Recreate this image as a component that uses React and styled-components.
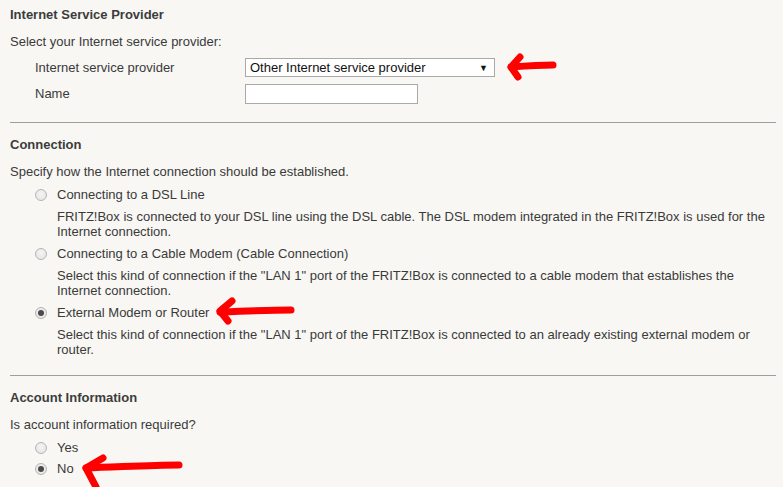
import React from "react";
import styled, { createGlobalStyle } from "styled-components";

const Global = createGlobalStyle`
  html, body { margin: 0; padding: 0; background: #f8f7f3; }
  body { font-family: "Liberation Sans", Arial, sans-serif; color: #3a3a3a; font-size: 13px; }
`;

const Page = styled.div`
  position: relative;
  width: 783px;
  height: 487px;
  overflow: hidden;
  box-sizing: border-box;
  padding: 7px 7px 0 10px;
`;

const Section = styled.section`
  display: flex;
  flex-direction: column;
`;

const Heading = styled.h2`
  margin: 0;
  font-size: 13px;
  font-weight: bold;
  line-height: 16px;
  color: #3c3c3c;
`;

const Intro = styled.p`
  margin: 11px 0 0;
  line-height: 16px;
`;

const FormGrid = styled.div`
  display: grid;
  grid-template-columns: 210px auto;
  row-gap: 7px;
  margin: 8px 0 0 25px;
  align-items: center;
  justify-items: start;
`;

const FieldLabel = styled.span`
  line-height: 16px;
`;

const Select = styled.div`
  box-sizing: border-box;
  width: 250px;
  height: 19px;
  border: 1px solid #a9a9a9;
  background: #fff;
  display: flex;
  align-items: center;
  justify-content: space-between;
  padding: 0 6px 0 4px;
  color: #111;
  font-size: 13px;
`;

const Caret = styled.span`
  font-size: 9px;
  color: #111;
`;

const TextInput = styled.div`
  box-sizing: border-box;
  width: 173px;
  height: 20px;
  border: 1px solid #a9a9a9;
  background: #fff;
`;

const Rule = styled.hr`
  margin: ${(p) => p.$top}px 0 14px;
  border: 0;
  border-top: 1px solid #9aa09d;
  height: 0;
`;

const Options = styled.div`
  display: flex;
  flex-direction: column;
  gap: ${(p) => p.$gap}px;
  margin: 7px 0 0 25px;
`;

const Option = styled.div`
  display: flex;
  flex-direction: column;
`;

const RadioRow = styled.div`
  display: flex;
  align-items: center;
  gap: 10px;
  line-height: 16px;
`;

const Radio = styled.span`
  box-sizing: border-box;
  width: 12px;
  height: 12px;
  border-radius: 50%;
  border: 1px solid #b5b5b5;
  background: radial-gradient(circle at 50% 40%, #f4f4f4 0%, #e2e2e2 100%);
  display: flex;
  align-items: center;
  justify-content: center;
  flex-shrink: 0;
  &::after {
    content: "";
    width: 6px;
    height: 6px;
    border-radius: 50%;
    background: ${(p) => (p.$checked ? "#4a4a4a" : "transparent")};
  }
`;

const Desc = styled.p`
  margin: 6px 0 0 22px;
  line-height: 15px;
`;

const Arrow = styled.svg`
  position: absolute;
  overflow: visible;
  pointer-events: none;
`;

export default function App() {
  return (
    <Page>
      <Global />
      <Section>
        <Heading>Internet Service Provider</Heading>
        <Intro>Select your Internet service provider:</Intro>
        <FormGrid>
          <FieldLabel>Internet service provider</FieldLabel>
          <Select>
            <span>Other Internet service provider</span>
            <Caret>▼</Caret>
          </Select>
          <FieldLabel>Name</FieldLabel>
          <TextInput />
        </FormGrid>
      </Section>
      <Rule $top={18} />
      <Section>
        <Heading>Connection</Heading>
        <Intro>Specify how the Internet connection should be established.</Intro>
        <Options $gap={7}>
          <Option>
            <RadioRow>
              <Radio />
              <span>Connecting to a DSL Line</span>
            </RadioRow>
            <Desc>
              FRITZ!Box is connected to your DSL line using the DSL cable. The DSL modem integrated in the FRITZ!Box is used for the
              Internet connection.
            </Desc>
          </Option>
          <Option>
            <RadioRow>
              <Radio />
              <span>Connecting to a Cable Modem (Cable Connection)</span>
            </RadioRow>
            <Desc>
              Select this kind of connection if the "LAN 1" port of the FRITZ!Box is connected to a cable modem that establishes the
              <br />
              Internet connection.
            </Desc>
          </Option>
          <Option>
            <RadioRow>
              <Radio $checked />
              <span>External Modem or Router</span>
            </RadioRow>
            <Desc>
              Select this kind of connection if the "LAN 1" port of the FRITZ!Box is connected to an already existing external modem or
              router.
            </Desc>
          </Option>
        </Options>
      </Section>
      <Rule $top={18} />
      <Section>
        <Heading>Account Information</Heading>
        <Intro>Is account information required?</Intro>
        <Options $gap={5}>
          <RadioRow>
            <Radio />
            <span>Yes</span>
          </RadioRow>
          <RadioRow>
            <Radio $checked />
            <span>No</span>
          </RadioRow>
        </Options>
      </Section>

      <Arrow style={{ left: 0, top: 0 }} width="783" height="487">
        <g fill="none" stroke="#ff0000" strokeWidth="7" strokeLinecap="round" strokeLinejoin="round">
          <path d="M553 65 C540 65 525 66 511 67" />
          <path d="M520 57 L511 67 L518 77" />
          <path d="M291 310 C270 310 245 311 220 312" />
          <path d="M232 301 L220 311 L228 321" />
          <path d="M179 465 C150 465 120 467 86 468" />
          <path d="M103 458 L86 468 L96 487" />
        </g>
      </Arrow>
    </Page>
  );
}
